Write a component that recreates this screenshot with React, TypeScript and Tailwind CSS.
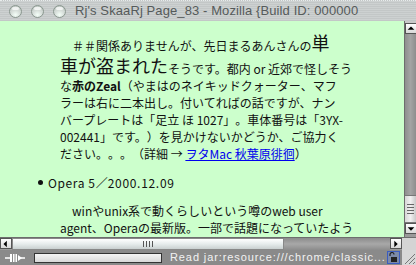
const TrafficLight = () => (
  <div className="w-[13px] h-[13px] rounded-full border border-[#8a978f] bg-[radial-gradient(circle_at_50%_80%,#f4fff8_0%,#d6ddd9_45%,#b9c2bd_100%)] flex justify-center">
    <div className="mt-[1px] w-[7px] h-[3px] rounded-full bg-white/70" />
  </div>
);

const ArrowBox = ({ dir }: { dir: 'up' | 'down' | 'left' | 'right' }) => {
  const pts = {
    up: '2,7 6,3 10,7',
    down: '2,4 6,8 10,4',
    left: '7,2 3,6 7,10',
    right: '4,2 8,6 4,10',
  }[dir];
  return (
    <div className="w-[12px] h-[11px] bg-[linear-gradient(180deg,#ffffff,#d8d8d8)] border border-[#555] flex items-center justify-center">
      <svg width="12" height="12" viewBox="0 0 12 12">
        <polygon points={pts} fill="#000" />
      </svg>
    </div>
  );
};

export default function App() {
  return (
    <div className="w-[416px] h-[265px] overflow-hidden flex flex-col bg-[#c9c9c9] font-['Liberation_Sans',sans-serif]">
      {/* Title bar */}
      <div className="h-[21px] flex items-center bg-[image:repeating-linear-gradient(180deg,#cdd1d1_0px,#cdd1d1_1px,#c3c7c7_1px,#c3c7c7_2px)] border-t border-dotted border-[#e8ecec]">
        <div className="flex items-center gap-[9px] pl-[9px]">
          <TrafficLight />
          <TrafficLight />
          <TrafficLight />
        </div>
        <div className="ml-[9px] text-[13px] text-[#555a5a] whitespace-nowrap tracking-[0.1px]">
          Rj's SkaaRj Page_83 - Mozilla {'{'}Build ID: 000000
        </div>
      </div>

      {/* Content + vertical scrollbar */}
      <div className="flex h-[216px]">
        <div className="w-[404px] bg-[#ccffcc] pl-[60px] pt-[10px] text-[12px] text-[#111] font-['Noto_Sans_CJK_JP',sans-serif] [text-spacing-trim:space-all] whitespace-nowrap overflow-hidden">
          <div className="h-[23px] flex items-end leading-[17px]">
            <span>　＃＃関係ありませんが、先日まるあんさんの</span>
            <span className="text-[18px] leading-[23px]">単</span>
          </div>
          <div className="h-[23px] flex items-end leading-[17px]">
            <span className="text-[18px] leading-[23px]">車が盗まれた</span>
            <span>そうです。都内 or 近郊で怪しそう</span>
          </div>
          <div className="leading-[17px]">
            な<b>赤のZeal</b>（やまはのネイキッドクォーター、マフ
          </div>
          <div className="leading-[17px]">ラーは右に二本出し。付いてればの話ですが、ナン</div>
          <div className="leading-[17px]">バープレートは「足立 ほ 1027」。車体番号は「3YX-</div>
          <div className="leading-[17px]">002441」です。）を見かけないかどうか、ご協力く</div>
          <div className="leading-[17px]">
            ださい。。。（詳細 → <a className="text-[#0000ee] underline">ヲタMac 秋葉原徘徊</a>）
          </div>

          <ul className="mt-[12px] -ml-[22px] leading-[17px]">
            <li className="flex items-center">
              <span className="w-[5px] h-[5px] rounded-full bg-[#111] mr-[5px]" />
              <span className="tracking-[0.6px]">Opera 5</span>
              <span>／</span>
              <span className="tracking-[0.7px]">2000.12.09</span>
            </li>
          </ul>

          <div className="mt-[11px] leading-[17px]">　winやunix系で動くらしいという噂のweb user</div>
          <div className="leading-[17px]">agent、Operaの最新版。一部で話題になっていたよう</div>
        </div>

        {/* Vertical scrollbar */}
        <div className="w-[12px] flex flex-col bg-[#9a9a9a] border-l border-[#6d6d6d]">
          <div className="h-[2px] bg-[#c9c9c9]" />
          <ArrowBox dir="up" />
          <div className="flex-1 bg-[linear-gradient(90deg,#8e8e8e,#a4a4a4_50%,#8e8e8e)]" />
          <div className="h-[28px] bg-[linear-gradient(90deg,#d6d6d6,#f0f0f0_50%,#c8c8c8)] border-y border-[#777] flex flex-col items-center justify-center gap-[2px]">
            <div className="w-[7px] h-[1px] bg-[#666]" />
            <div className="w-[7px] h-[1px] bg-[#666]" />
            <div className="w-[7px] h-[1px] bg-[#666]" />
            <div className="w-[7px] h-[1px] bg-[#666]" />
          </div>
          <ArrowBox dir="down" />
          <div className="h-[3px] bg-[#9a9a9a]" />
        </div>
      </div>

      {/* Horizontal scrollbar */}
      <div className="flex h-[13px] bg-[#9c9c9c] border-t border-[#6d6d6d]">
        <ArrowBox dir="left" />
        <div className="w-[272px] h-[12px] bg-[linear-gradient(180deg,#ffffff,#e6ecec_50%,#c9d0d0)] border border-[#888] flex items-center justify-center gap-[2px]">
          <div className="w-[1px] h-[6px] bg-[#555]" />
          <div className="w-[1px] h-[6px] bg-[#555]" />
          <div className="w-[1px] h-[6px] bg-[#555]" />
          <div className="w-[1px] h-[6px] bg-[#555]" />
        </div>
        <div className="flex-1 bg-[linear-gradient(180deg,#8c8c8c,#a8a8a8_50%,#8c8c8c)]" />
        <ArrowBox dir="right" />
        <div className="w-[14px] bg-[#d4d4d4]" />
      </div>

      {/* Status bar */}
      <div className="flex items-center h-[15px] bg-[#8a8a8a]">
        <div className="w-[30px] flex justify-center">
          <svg width="22" height="10" viewBox="0 0 22 10">
            <line x1="1" y1="5" x2="6" y2="5" stroke="#fff" strokeWidth="1.5" />
            <rect x="6" y="1" width="2" height="8" fill="#fff" />
            <rect x="9" y="1" width="1.5" height="8" fill="#fff" />
            <rect x="11.5" y="1" width="1.5" height="8" fill="#fff" />
            <polygon points="14,2 18,5 14,8" fill="#fff" />
            <line x1="17" y1="5" x2="21" y2="5" stroke="#fff" strokeWidth="1.5" />
          </svg>
        </div>
        <div className="ml-[4px] w-[128px] h-[10px] bg-[linear-gradient(180deg,#f4f4f4,#d8d8d8)] border border-[#333]" />
        <div className="ml-[8px] flex-1 text-[11px] text-[#f2f2f2] tracking-[0.9px] whitespace-nowrap overflow-hidden leading-[15px]">
          Read jar:resource:///chrome/classic...
        </div>
        <div className="w-[13px] h-[13px] border border-[#3a5cc0] bg-[#7c8aa8] flex items-center justify-center mr-[2px]">
          <svg width="11" height="11" viewBox="0 0 11 11">
            <path d="M2 4 V2.5 A2 2 0 0 1 6 2.5" fill="none" stroke="#222" strokeWidth="1.2" />
            <rect x="3" y="5" width="6" height="5" fill="#222" />
          </svg>
        </div>
        <div className="w-[14px] h-[15px] bg-[#d8d8d8] flex items-end justify-end">
          <svg width="14" height="14" viewBox="0 0 14 14">
            <line x1="3" y1="13" x2="13" y2="3" stroke="#777" strokeWidth="1" />
            <line x1="7" y1="13" x2="13" y2="7" stroke="#777" strokeWidth="1" />
            <line x1="11" y1="13" x2="13" y2="11" stroke="#777" strokeWidth="1" />
          </svg>
        </div>
      </div>
    </div>
  );
}
